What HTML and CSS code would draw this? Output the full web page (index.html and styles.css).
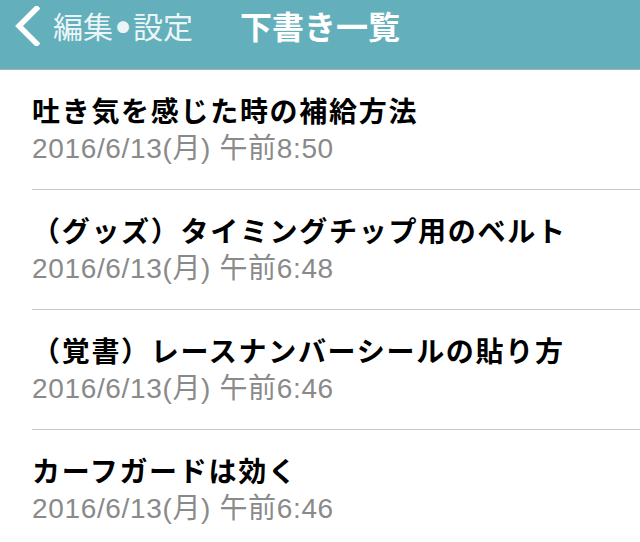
FILE: index.html
```html
<!DOCTYPE html>
<html lang="ja">
<head>
<meta charset="utf-8">
<title>下書き一覧</title>
<link rel="stylesheet" href="styles.css">
</head>
<body>
<header class="navbar">
  <div class="nav-row">
    <a class="back" href="#">
      <svg class="chevron" width="25" height="40" viewBox="0 0 25 40" aria-hidden="true">
        <path d="M21.5 2.5 L4 20 L21.5 37.5" fill="none" stroke="#ffffff" stroke-width="5.5" stroke-linecap="square" stroke-linejoin="miter"/>
      </svg>
      <span class="back-label">編集<span class="dot">●</span>設定</span>
    </a>
    <h1 class="nav-title">下書き一覧</h1>
  </div>
</header>
<ul class="drafts">
  <li class="draft">
    <div class="draft-title">吐き気を感じた時の補給方法</div>
    <div class="draft-date">2016/6/13(月) 午前8:50</div>
  </li>
  <li class="draft">
    <div class="draft-title">（グッズ）タイミングチップ用のベルト</div>
    <div class="draft-date">2016/6/13(月) 午前6:48</div>
  </li>
  <li class="draft">
    <div class="draft-title">（覚書）レースナンバーシールの貼り方</div>
    <div class="draft-date">2016/6/13(月) 午前6:46</div>
  </li>
  <li class="draft">
    <div class="draft-title">カーフガードは効く</div>
    <div class="draft-date">2016/6/13(月) 午前6:46</div>
  </li>
</ul>
</body>
</html>
```

FILE: styles.css
```css
html, body {
  margin: 0;
  padding: 0;
  background: #ffffff;
  overflow: hidden;
}
body {
  font-family: "Noto Sans CJK JP", "Noto Sans", sans-serif;
}
.navbar {
  height: 69px;
  background: #63b0bc;
  border-bottom: 1px solid #a3b3b6;
}
.nav-row {
  height: 52px;
  display: flex;
  align-items: center;
  padding-left: 15px;
}
.back {
  display: flex;
  align-items: center;
  text-decoration: none;
}
.chevron {
  display: block;
}
.back-label {
  margin-left: 13px;
  padding-bottom: 3px;
  font-size: 30px;
  line-height: 36px;
  color: rgba(255, 255, 255, 0.9);
  font-weight: 400;
  white-space: nowrap;
}
.dot {
  display: inline-block;
  width: 20px;
  font-size: 13px;
  line-height: 1;
  vertical-align: 6px;
  text-align: center;
}
.nav-title {
  margin: 0 0 0 47px;
  padding-bottom: 3px;
  font-size: 32px;
  line-height: 36px;
  font-weight: 700;
  color: #ffffff;
  white-space: nowrap;
}
.drafts {
  list-style: none;
  margin: 0;
  padding: 0;
}
.draft {
  margin-left: 32px;
  height: 119px;
  border-bottom: 1px solid #c8c7cc;
}
.draft-title {
  padding-top: 20px;
  font-size: 28px;
  letter-spacing: 1.7px;
  line-height: 40px;
  font-weight: 700;
  color: #000000;
  white-space: nowrap;
}
.draft-date {
  font-family: "Liberation Sans", "Noto Sans CJK JP", sans-serif;
  font-size: 28px;
  letter-spacing: 0.65px;
  line-height: 38px;
  color: #8a8a8a;
  white-space: nowrap;
}
```
